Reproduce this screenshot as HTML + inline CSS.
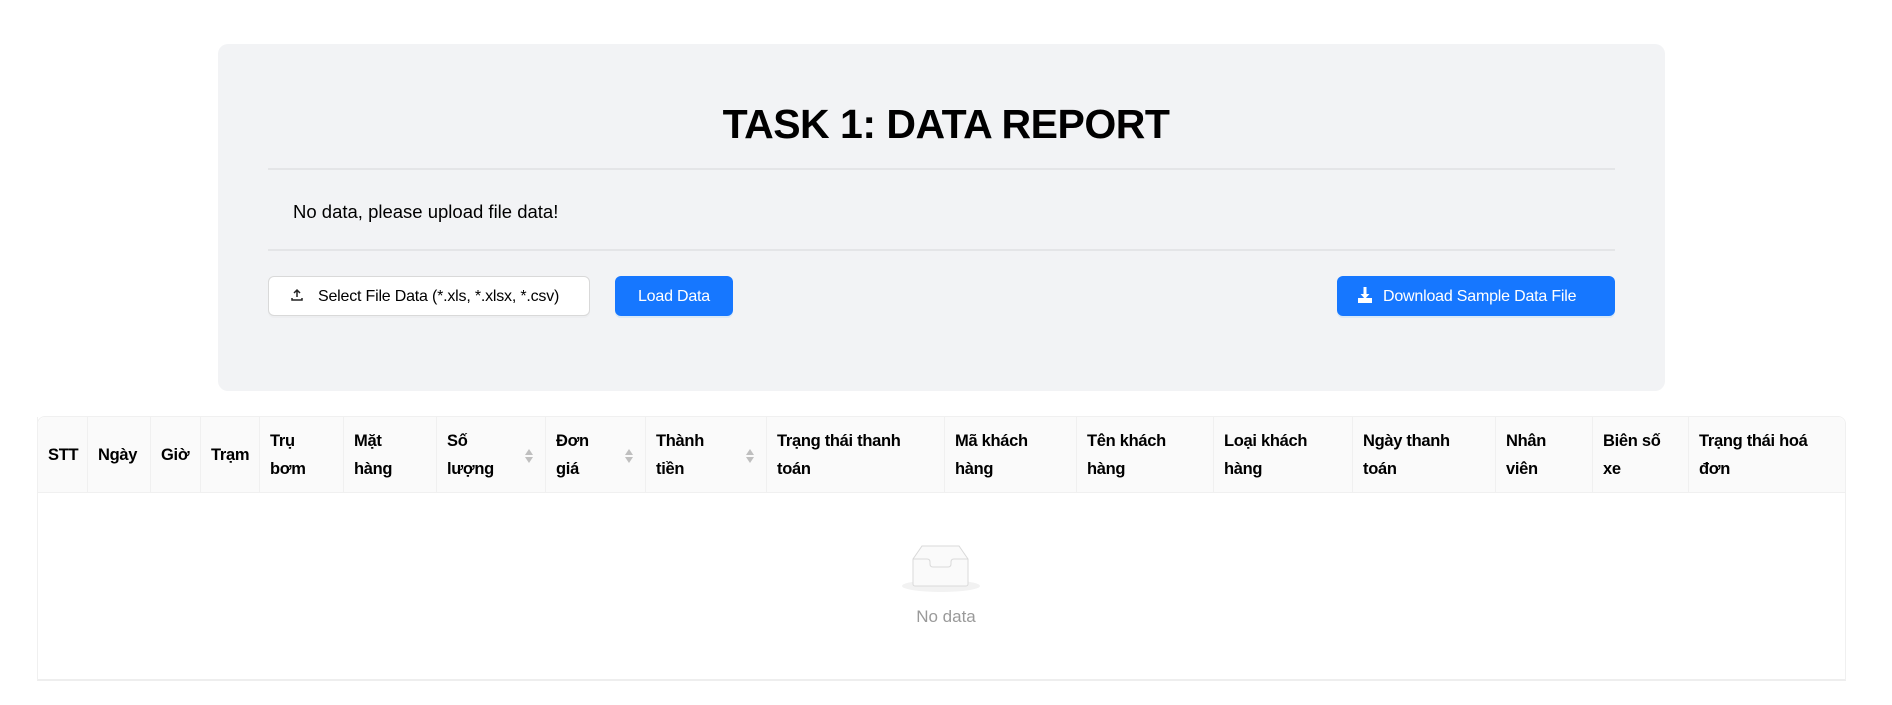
<!DOCTYPE html>
<html><head><meta charset="utf-8"><style>
*{box-sizing:border-box;margin:0;padding:0}
body{width:1892px;height:705px;background:#fff;font-family:"Liberation Sans",sans-serif;color:#000;position:relative;overflow:hidden}
.card{position:absolute;left:218px;top:44px;width:1447px;height:347px;background:#f2f3f5;border-radius:10px}
h1{position:absolute;left:0;right:0;top:98px;text-align:center;font-size:41px;font-weight:bold;letter-spacing:-0.5px;line-height:52px}
.hr{position:absolute;left:268px;width:1347px;height:2px;background:#e4e5e7}
.msg{position:absolute;left:293px;top:200px;font-size:18.5px;line-height:24px}
.btn{position:absolute;top:276px;height:40px;border-radius:6px;font-size:16px;line-height:42px;white-space:nowrap;letter-spacing:-0.2px}
.b1{left:268px;width:322px;background:#fff;border:1px solid #d9d9d9;padding-left:21px;line-height:40px;box-shadow:0 2px 0 rgba(0,0,0,.02)}
.b2{left:615px;width:118px;background:#1677ff;color:#fff;text-align:center;box-shadow:0 2px 0 rgba(5,145,255,.1)}
.b3{left:1337px;width:278px;background:#1677ff;color:#fff;padding-left:20px;box-shadow:0 2px 0 rgba(5,145,255,.1)}
svg{vertical-align:middle}
.tbl{position:absolute;left:37px;top:416px;width:1809px;height:265px;border:1px solid #f0f0f0;border-radius:8px 8px 0 0;border-bottom:2px solid #eee}
.th{position:absolute;top:0;height:76px;background:#fafafa;border-bottom:1px solid #f0f0f0;font-weight:bold;font-size:16.5px;line-height:28px;padding:10px 0 0 10px;letter-spacing:-0.3px}
.th.c{padding-top:24px}
.th:before{content:"";position:absolute;left:-1px;top:0;bottom:0;width:1px;background:#f0f0f0}
.sort{position:absolute;right:12px;top:29px;width:10px;height:20px}
.nd{position:absolute;left:0;right:0;top:607px;text-align:center;color:#9a9a9a;font-size:17px}
</style></head><body>
<div class="card"></div>
<h1>TASK 1: DATA REPORT</h1>
<div class="hr" style="top:168px"></div>
<div class="msg">No data, please upload file data!</div>
<div class="hr" style="top:249px"></div>
<div class="btn b1"><svg width="14" height="14" viewBox="0 0 14 14" style="margin-right:14px;margin-top:-3px"><path d="M7 2v7M4 5l3-3 3 3M2 10v2h10v-2" stroke="#222" stroke-width="1.5" fill="none"/></svg>Select File Data (*.xls, *.xlsx, *.csv)</div>
<div class="btn b2">Load Data</div>
<div class="btn b3"><svg width="16" height="18" viewBox="0 0 16 18" style="margin-right:10px;margin-top:-4px"><path d="M6.5 1h3v7h3l-4.5 5-4.5-5h3z" fill="#fff"/><rect x="1" y="12" width="14" height="5" fill="#fff"/></svg>Download Sample Data File</div>
<div class="tbl">
<div class="th c" style="left:0;width:50px;border-top-left-radius:8px">STT</div>
<div class="th c" style="left:50px;width:63px">Ngày</div>
<div class="th c" style="left:113px;width:50px">Giờ</div>
<div class="th c" style="left:163px;width:59px">Trạm</div>
<div class="th" style="left:222px;width:84px">Trụ<br>bơm</div>
<div class="th" style="left:306px;width:93px">Mặt<br>hàng</div>
<div class="th" style="left:399px;width:109px">Số<br>lượng<svg class="sort" viewBox="0 0 10 20"><path d="M5 3l4 6H1zM5 17l4-6H1z" fill="#bfbfbf"/></svg></div>
<div class="th" style="left:508px;width:100px">Đơn<br>giá<svg class="sort" viewBox="0 0 10 20"><path d="M5 3l4 6H1zM5 17l4-6H1z" fill="#bfbfbf"/></svg></div>
<div class="th" style="left:608px;width:121px">Thành<br>tiền<svg class="sort" viewBox="0 0 10 20"><path d="M5 3l4 6H1zM5 17l4-6H1z" fill="#bfbfbf"/></svg></div>
<div class="th" style="left:729px;width:178px">Trạng thái thanh<br>toán</div>
<div class="th" style="left:907px;width:132px">Mã khách<br>hàng</div>
<div class="th" style="left:1039px;width:137px">Tên khách<br>hàng</div>
<div class="th" style="left:1176px;width:139px">Loại khách<br>hàng</div>
<div class="th" style="left:1315px;width:143px">Ngày thanh<br>toán</div>
<div class="th" style="left:1458px;width:97px">Nhân<br>viên</div>
<div class="th" style="left:1555px;width:96px">Biên số<br>xe</div>
<div class="th" style="left:1651px;width:156px;border-top-right-radius:8px">Trạng thái hoá<br>đơn</div>
</div>
<svg style="position:absolute;left:900px;top:542px" width="104" height="52" viewBox="0 0 104 52">
<ellipse cx="41" cy="44" rx="39" ry="6" fill="#f2f2f2"/>
<path d="M13 17L22 4h37l9 13v25a2 2 0 0 1-2 2H15a2 2 0 0 1-2-2z" fill="#fafafa" stroke="#d9d9d9" stroke-width="1"/>
<path d="M13 17h14c2 0 3 1 3 3v2c0 2 1 3 3 3h15c2 0 3-1 3-3v-2c0-2 1-3 3-3h14" fill="none" stroke="#d9d9d9"/>
</svg>
<div class="nd">No data</div>
</body></html>
